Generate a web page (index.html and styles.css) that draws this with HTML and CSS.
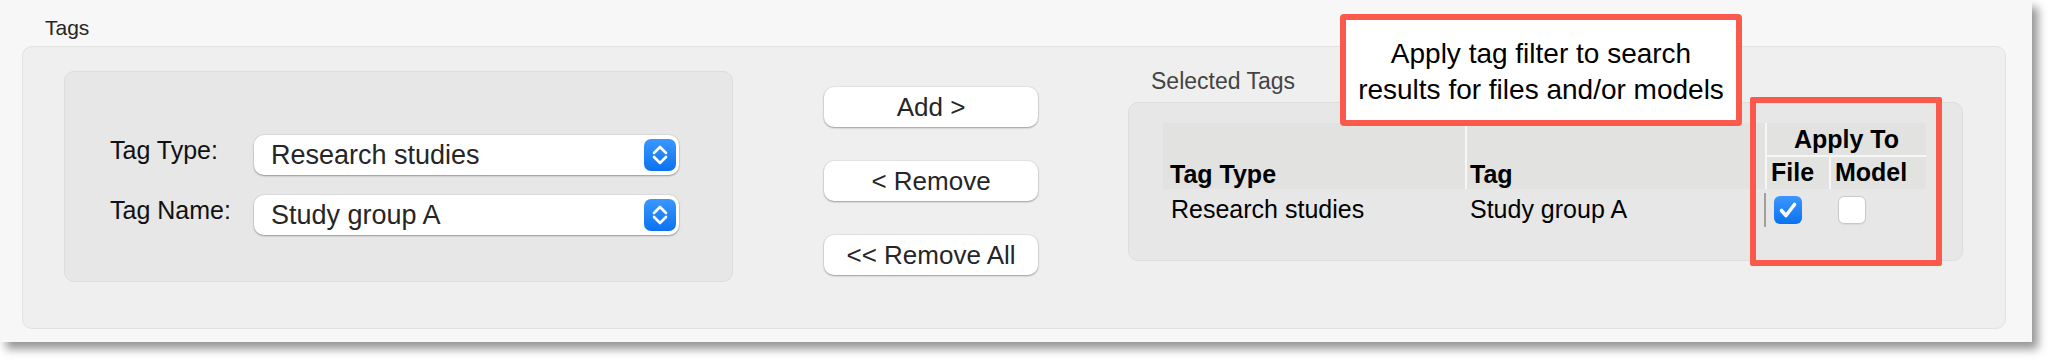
FILE: index.html
```html
<!DOCTYPE html>
<html lang="en">
<head>
    <meta charset="UTF-8">
    <meta name="viewport" content="width=device-width, initial-scale=1.0">
    <title>Tags</title>
    <link rel="stylesheet" href="styles.css">
</head>
<body>
    <div class="window">
        <div class="group-title">Tags</div>
        <div class="group">
            <div class="picker">
                <label class="field-label">Tag Type:</label>
                <div class="select">
                    <span>Research studies</span>
                    <span class="stepper">
                        <svg width="32" height="32" viewBox="0 0 32 32"><path d="M10 14 L16 8 L22 14 M10 18 L16 24 L22 18" fill="none" stroke="#fff" stroke-width="2.6" stroke-linecap="round" stroke-linejoin="round"/></svg>
                    </span>
                </div>
                <label class="field-label">Tag Name:</label>
                <div class="select">
                    <span>Study group A</span>
                    <span class="stepper">
                        <svg width="32" height="32" viewBox="0 0 32 32"><path d="M10 14 L16 8 L22 14 M10 18 L16 24 L22 18" fill="none" stroke="#fff" stroke-width="2.6" stroke-linecap="round" stroke-linejoin="round"/></svg>
                    </span>
                </div>
            </div>
            <div class="actions">
                <button class="button">Add &gt;</button>
                <button class="button">&lt; Remove</button>
                <button class="button">&lt;&lt; Remove All</button>
            </div>
            <div class="selected">
                <div class="selected-title">Selected Tags</div>
                <div class="selected-box">
                    <div class="tag-table">
                        <div class="th th-type">Tag Type</div>
                        <div class="th th-tag">Tag</div>
                        <div class="th th-apply">Apply To</div>
                        <div class="th th-file">File</div>
                        <div class="th th-model">Model</div>
                        <div class="td td-type">Research studies</div>
                        <div class="td td-tag">Study group A</div>
                        <div class="td td-file">
                            <svg class="check" width="28" height="28" viewBox="0 0 28 28">
                                <defs>
                                    <linearGradient id="blue" x1="0" y1="0" x2="0" y2="1">
                                        <stop offset="0" stop-color="#3b97ff"/>
                                        <stop offset="1" stop-color="#0b72f0"/>
                                    </linearGradient>
                                </defs>
                                <rect x="0" y="0" width="28" height="28" rx="6" fill="url(#blue)"/>
                                <path d="M7.5 14.5 L12 19.5 L20.5 8.5" fill="none" stroke="#fff" stroke-width="3.6" stroke-linecap="round" stroke-linejoin="round"/>
                            </svg>
                        </div>
                        <div class="td td-model">
                            <span class="box"></span>
                        </div>
                    </div>
                </div>
            </div>
        </div>
        <div class="callout">Apply tag filter to search<br>results for files and/or models</div>
        <div class="highlight"></div>
    </div>
</body>
</html>
```

FILE: styles.css
```css
body {
    margin: 0;
    padding-bottom: 20px;
    min-height: 362px;
    box-sizing: border-box;
    background-color: #fff;
    font-family: 'Liberation Sans', Arial, sans-serif;
    color: #111;
}
.window {
    position: relative;
    width: 2032px;
    height: 342px;
    box-sizing: border-box;
    padding-top: 15px;
    background-color: #f7f7f7;
    box-shadow: 6px 7px 9px rgba(0,0,0,0.42);
}
.group-title {
    padding-left: 45px;
    font-size: 21px;
    line-height: 26px;
    color: #262626;
}
.group {
    display: flex;
    align-items: flex-start;
    width: 1984px;
    height: 283px;
    box-sizing: border-box;
    margin: 5px 0 0 22px;
    padding: 0 41px;
    background-color: #efefef;
    border: 1px solid #e2e2e2;
    border-radius: 10px;
}
.picker {
    display: grid;
    grid-template-columns: 144px 425px;
    grid-auto-rows: 40px;
    row-gap: 20px;
    align-items: start;
    width: 669px;
    height: 211px;
    box-sizing: border-box;
    margin-top: 24px;
    padding: 63px 0 0 45px;
    background-color: #e7e7e7;
    border: 1px solid #dddddd;
    border-radius: 10px;
}
.field-label {
    font-size: 25px;
    line-height: 31px;
    color: #111;
}
.select {
    display: flex;
    align-items: center;
    justify-content: space-between;
    height: 40px;
    padding-left: 17px;
    background-color: #fff;
    border-radius: 10px;
    box-shadow: 0 1px 2px rgba(0,0,0,0.32), 0 0 0 1px rgba(0,0,0,0.04);
    font-size: 27px;
    line-height: 38px;
    color: #262626;
}
.stepper {
    display: block;
    width: 32px;
    height: 32px;
    margin-right: 3px;
    border-radius: 7px;
    background: linear-gradient(#3b97ff, #0b72f0);
}
.stepper svg {
    display: block;
}
.actions {
    display: flex;
    flex-direction: column;
    gap: 34px;
    width: 214px;
    margin: 40px 0 0 91px;
}
.button {
    height: 40px;
    padding: 0;
    background-color: #fff;
    border: none;
    border-radius: 10px;
    box-shadow: 0 1px 2px rgba(0,0,0,0.32), 0 0 0 1px rgba(0,0,0,0.04);
    font-family: 'Liberation Sans', Arial, sans-serif;
    font-size: 26px;
    color: #262626;
    cursor: pointer;
}
.selected {
    width: 835px;
    margin: 20px 0 0 90px;
}
.selected-title {
    padding-left: 23px;
    margin-bottom: 7px;
    font-size: 23px;
    line-height: 28px;
    color: #444;
}
.selected-box {
    height: 159px;
    box-sizing: border-box;
    padding: 20px 0 0 34px;
    background-color: #e7e7e7;
    border: 1px solid #dddddd;
    border-radius: 10px;
}
.tag-table {
    display: grid;
    grid-template-columns: 302px 300px 64px 97px;
    grid-template-rows: 34px 32px 41px;
    font-size: 25px;
    color: #000;
}
.th {
    background-color: #e2e2e0;
    font-weight: bold;
    box-sizing: border-box;
}
.th-type {
    grid-row: 1 / 3;
    display: flex;
    align-items: flex-end;
    padding-left: 7px;
    line-height: 29px;
}
.th-tag {
    grid-row: 1 / 3;
    display: flex;
    align-items: flex-end;
    padding-left: 3px;
    line-height: 29px;
    border-left: 2px solid #f6f6f6;
}
.th-apply {
    grid-column: 3 / 5;
    text-align: center;
    padding-top: 1px;
    line-height: 31px;
    border-left: 2px solid #f6f6f6;
    border-bottom: 2px solid #f6f6f6;
}
.th-file,
.th-model {
    padding-left: 4px;
    line-height: 30px;
    border-left: 2px solid #f6f6f6;
}
.td {
    line-height: 41px;
}
.td-type {
    padding-left: 8px;
}
.td-tag {
    padding-left: 5px;
}
.td-file {
    display: flex;
    align-items: center;
    align-self: center;
    height: 34px;
    padding-left: 8px;
    border-left: 2px solid #a09f98;
    margin-left: -1px;
}
.td-model {
    display: flex;
    align-items: center;
    padding-left: 9px;
}
.check {
    display: block;
}
.box {
    display: block;
    width: 28px;
    height: 28px;
    box-sizing: border-box;
    background-color: #fff;
    border: 1px solid #c9c9c9;
    border-radius: 6px;
    box-shadow: 0 1px 1px rgba(0,0,0,0.06);
}
.callout {
    position: absolute;
    left: 1340px;
    top: 14px;
    width: 402px;
    box-sizing: border-box;
    padding: 16px 0 12px;
    background-color: #fff;
    border: 6px solid #fa5a4b;
    border-radius: 4px;
    text-align: center;
    font-size: 28px;
    line-height: 36px;
    color: #000;
}
.highlight {
    position: absolute;
    left: 1750px;
    top: 97px;
    width: 192px;
    height: 169px;
    box-sizing: border-box;
    border: 6px solid #fa5a4b;
    border-radius: 2px;
}
```
